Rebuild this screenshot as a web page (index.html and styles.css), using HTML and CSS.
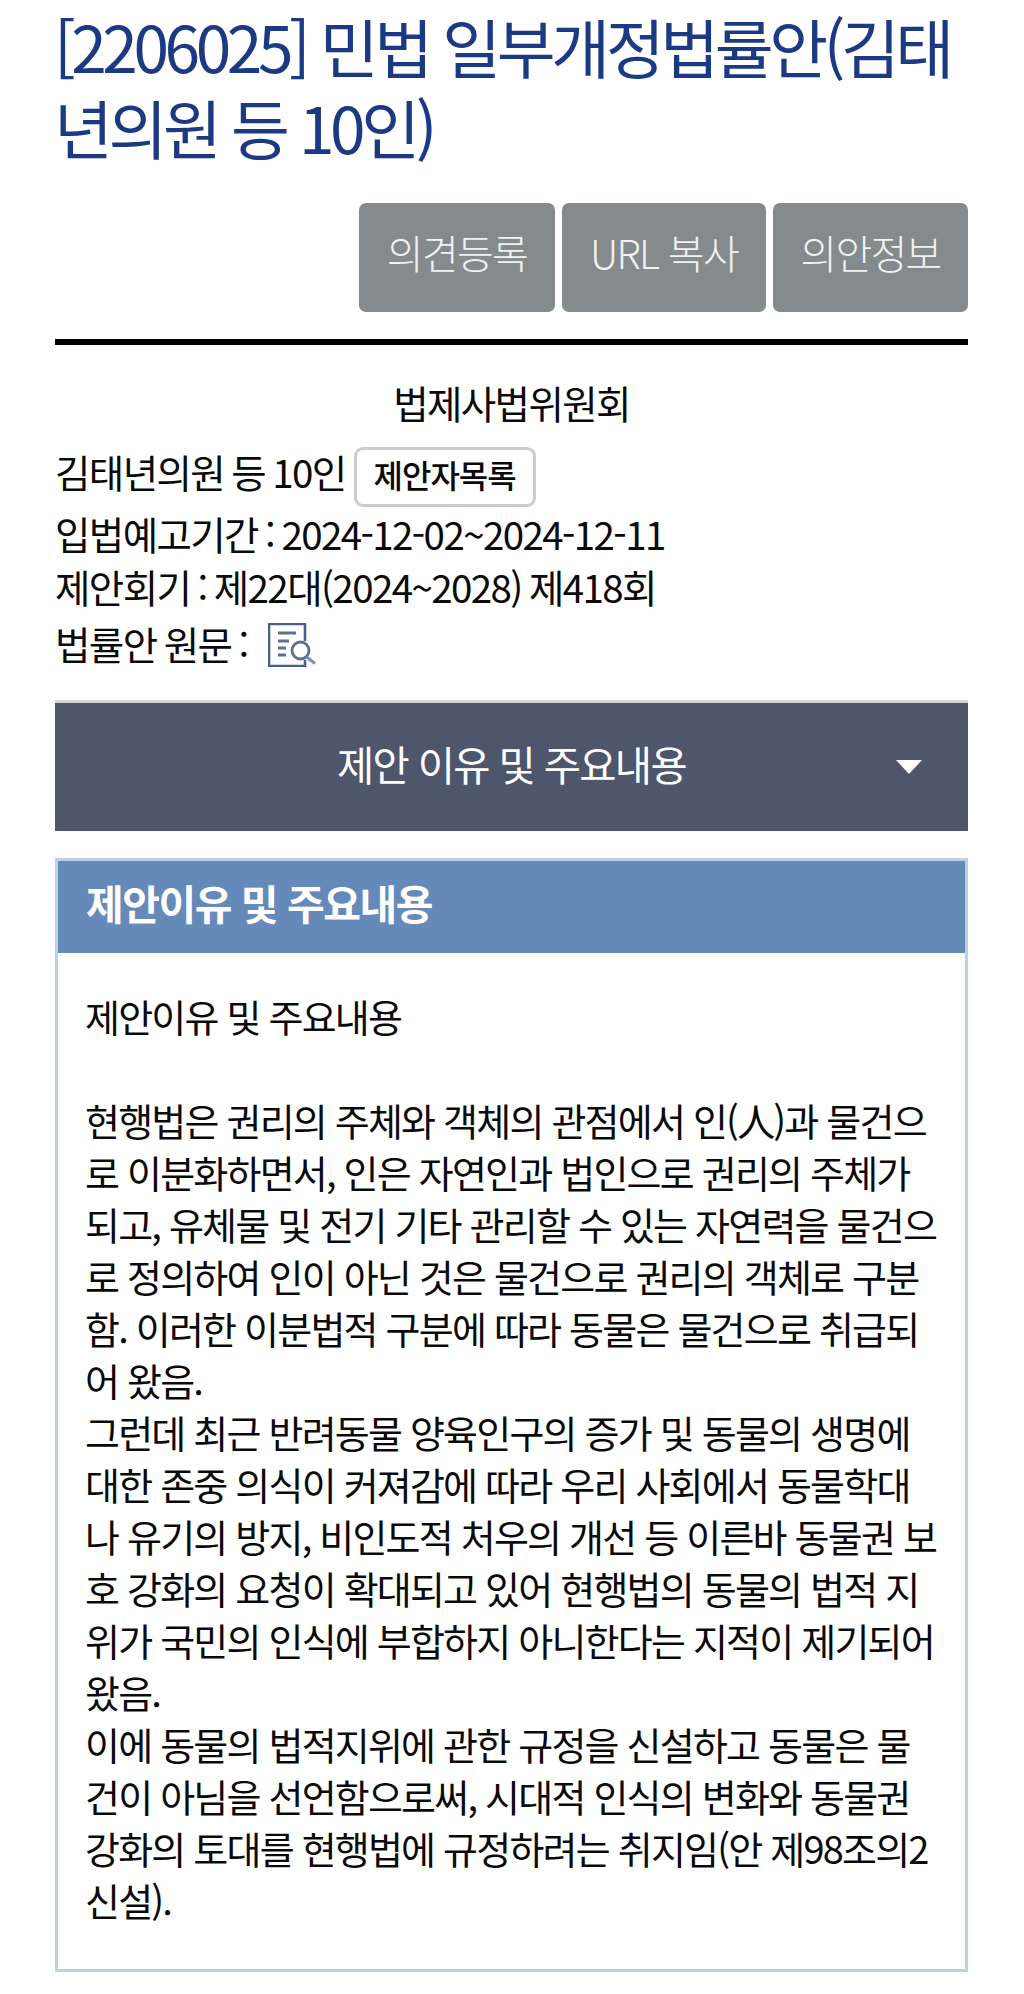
FILE: index.html
```html
<!DOCTYPE html>
<html lang="ko">
<head>
  <meta charset="UTF-8">
  <meta name="viewport" content="width=device-width, initial-scale=1.0">
  <title>법률안 입법예고</title>
  <link rel="stylesheet" href="styles.css">
</head>
<body>
  <h1 class="bill-title">[2206025] 민법 일부개정법률안(김태<br>년의원 등 10인)</h1>
  <div class="actions">
    <a class="action-btn btn-opinion">의견등록</a>
    <a class="action-btn btn-url">URL 복사</a>
    <a class="action-btn btn-info">의안정보</a>
  </div>
  <div class="bill-meta">
    <div class="committee">법제사법위원회</div>
    <div class="meta-row proposer">김태년의원 등 10인 <button class="list-btn">제안자목록</button></div>
    <div class="meta-row period">입법예고기간 : 2024-12-02~2024-12-11</div>
    <div class="meta-row session">제안회기 : 제22대(2024~2028) 제418회</div>
    <div class="meta-row original">법률안 원문 :
      <svg class="doc-icon" viewBox="0 0 48 44" width="48" height="44">
        <path d="M37 18V1H1v42h36v-6" fill="none" stroke="#4a6089" stroke-width="2.6"/>
        <path d="M10 10h18M10 18h11M10 25h8M10 32h8" fill="none" stroke="#5d7196" stroke-width="2.8"/>
        <circle cx="32.5" cy="27.5" r="8.5" fill="none" stroke="#5d7196" stroke-width="2.8"/>
        <path d="M38.5 34l8.5 6.5" fill="none" stroke="#7f91b0" stroke-width="3"/>
      </svg>
    </div>
  </div>
  <div class="accordion">
    <span>제안 이유 및 주요내용</span>
    <i class="caret"></i>
  </div>
  <div class="content-box">
    <div class="content-head">제안이유 및 주요내용</div>
    <div class="content-body">
      제안이유 및 주요내용<br>
      <br>
      현행법은 권리의 주체와 객체의 관점에서 인(人)과 물건으<br>
      로 이분화하면서, 인은 자연인과 법인으로 권리의 주체가<br>
      되고, 유체물 및 전기 기타 관리할 수 있는 자연력을 물건으<br>
      로 정의하여 인이 아닌 것은 물건으로 권리의 객체로 구분<br>
      함. 이러한 이분법적 구분에 따라 동물은 물건으로 취급되<br>
      어 왔음.<br>
      그런데 최근 반려동물 양육인구의 증가 및 동물의 생명에<br>
      대한 존중 의식이 커져감에 따라 우리 사회에서 동물학대<br>
      나 유기의 방지, 비인도적 처우의 개선 등 이른바 동물권 보<br>
      호 강화의 요청이 확대되고 있어 현행법의 동물의 법적 지<br>
      위가 국민의 인식에 부합하지 아니한다는 지적이 제기되어<br>
      왔음.<br>
      이에 동물의 법적지위에 관한 규정을 신설하고 동물은 물<br>
      건이 아님을 선언함으로써, 시대적 인식의 변화와 동물권<br>
      강화의 토대를 현행법에 규정하려는 취지임(안 제98조의2<br>
      신설).
    </div>
  </div>
</body>
</html>
```

FILE: styles.css
```css
* {
  box-sizing: border-box;
}
body {
  margin: 0;
  padding: 0 56px 22px 55px;
  background: #fff;
  color: #0a0a0a;
  font-family: "Noto Sans CJK KR", "Noto Sans", sans-serif;
  font-size: 38px;
  letter-spacing: -1.8px;
}
.bill-title {
  margin: 0 0 0 -1px;
  padding-top: 5px;
  color: #1c3a84;
  font-size: 64px;
  font-weight: 400;
  line-height: 81px;
  letter-spacing: -4.4px;
}
.actions {
  display: flex;
  justify-content: flex-end;
  gap: 7px;
  margin-top: 36px;
  padding-bottom: 27px;
  border-bottom: 6px solid #000;
}
.action-btn {
  display: flex;
  justify-content: center;
  align-items: center;
  height: 109px;
  padding-bottom: 11px;
  background-color: #858a8c;
  border-radius: 7px;
  color: #f2f2f2;
  font-size: 40px;
  font-weight: 300;
  letter-spacing: -1.7px;
}
.btn-opinion { width: 196px; }
.btn-url { width: 204px; }
.btn-info { width: 195px; }
.bill-meta {
  font-size: 38.5px;
  letter-spacing: -1.6px;
  word-spacing: -2px;
}
.committee {
  margin-top: 31px;
  text-align: center;
  line-height: 52px;
}
.meta-row {
  display: flex;
  align-items: center;
  gap: 8px;
  line-height: 53px;
}
.proposer {
  height: 60px;
  margin-top: 13px;
}
.list-btn {
  height: 60px;
  width: 182px;
  margin-top: 12px;
  padding: 0 0 7px;
  background: #fff;
  border: 3px solid #ccc;
  border-radius: 9px;
  color: #0a0a0a;
  font-family: inherit;
  font-size: 32px;
  font-weight: 500;
  letter-spacing: -1px;
}
.period {
  margin-top: 6px;
}
.original {
  gap: 20px;
  height: 56px;
  margin-top: 2px;
}
.doc-icon {
  margin-top: 3px;
}
.accordion {
  display: flex;
  justify-content: center;
  align-items: center;
  position: relative;
  height: 131px;
  margin-top: 29px;
  background-color: #4d566b;
  border-top: 3px solid #d5d5d5;
  color: #fff;
  font-size: 40.5px;
  font-weight: 400;
  letter-spacing: -1.7px;
  padding-bottom: 8px;
}
.caret {
  position: absolute;
  right: 46px;
  top: 57px;
  border-left: 13px solid transparent;
  border-right: 13px solid transparent;
  border-top: 14px solid #fff;
}
.content-box {
  margin-top: 27px;
  border: 3px solid #bcd0e6;
}
.content-head {
  height: 92px;
  padding-left: 28px;
  background-color: #6589b9;
  color: #fff;
  font-size: 41px;
  font-weight: 700;
  letter-spacing: -1.5px;
  line-height: 82px;
}
.content-body {
  padding: 37px 27px 43px;
  line-height: 52px;
}
```
